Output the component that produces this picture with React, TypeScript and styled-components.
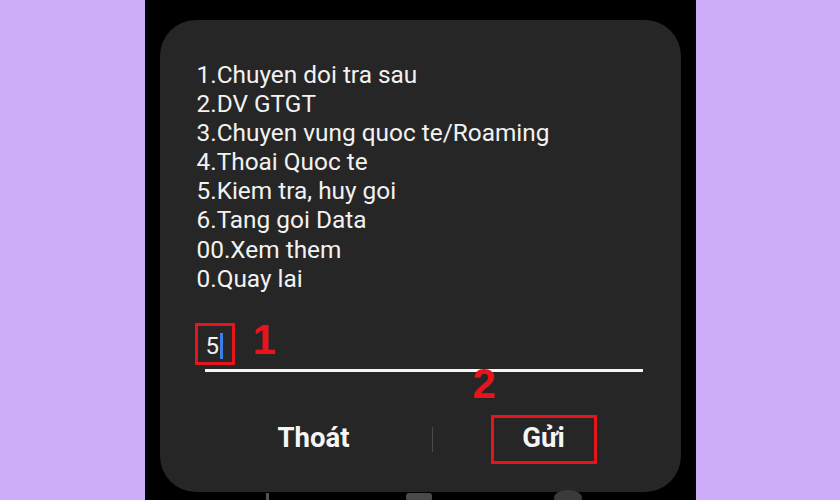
import React from 'react';
import styled, { createGlobalStyle } from 'styled-components';

const menuItems = [
  '1.Chuyen doi tra sau',
  '2.DV GTGT',
  '3.Chuyen vung quoc te/Roaming',
  '4.Thoai Quoc te',
  '5.Kiem tra, huy goi',
  '6.Tang goi Data',
  '00.Xem them',
  '0.Quay lai',
];

const GlobalStyle = createGlobalStyle`
  html, body {
    margin: 0;
    padding: 0;
    background: #cdadf7;
  }
  * {
    box-sizing: border-box;
  }
`;

function App(): JSX.Element {
  return (
    <>
      <GlobalStyle />
      <Page>
        <Side />
        <Phone>
          <Dialog>
            <MenuList>
              {menuItems.map((item) => (
                <MenuLine key={item}>{item}</MenuLine>
              ))}
            </MenuList>
            <InputRow>
              <HighlightBox>
                <InputValue>5</InputValue>
                <Cursor />
              </HighlightBox>
              <StepMark $left={58} $top={-4}>1</StepMark>
            </InputRow>
            <Underline>
              <StepMark $left={268} $top={-6}>2</StepMark>
            </Underline>
            <ButtonRow>
              <ButtonCell>
                <ActionText>Thoát</ActionText>
              </ButtonCell>
              <Divider />
              <ButtonCell>
                <SendBox>
                  <ActionText>Gửi</ActionText>
                </SendBox>
              </ButtonCell>
            </ButtonRow>
          </Dialog>
          <NavBar>
            <NavLines />
            <NavHome />
            <NavBack />
          </NavBar>
        </Phone>
        <Side />
      </Page>
    </>
  );
}

const Page = styled.div`
  width: 840px;
  height: 500px;
  display: flex;
  overflow: hidden;
  background: #cdadf7;
`;

const Side = styled.div`
  flex: 1;
  background: #cdadf7;
`;

const Phone = styled.div`
  width: 551px;
  height: 500px;
  background: #000;
  padding: 20px 15px 0 15px;
  display: flex;
  flex-direction: column;
`;

const Dialog = styled.div`
  height: 472px;
  flex-shrink: 0;
  background: #262626;
  border-radius: 36px;
  padding: 40px 38px 0 35px;
  display: flex;
  flex-direction: column;
`;

const MenuList = styled.div`
  display: flex;
  flex-direction: column;
  padding-left: 2px;
`;

const MenuLine = styled.div`
  font-family: Roboto, 'Noto Sans', sans-serif;
  font-size: 24.4px;
  line-height: 29.1px;
  color: #f2f2f2;
  white-space: nowrap;
`;

const InputRow = styled.div`
  position: relative;
  margin-top: 30px;
  display: flex;
`;

const HighlightBox = styled.div`
  width: 40px;
  height: 42px;
  border: 3px solid #e8131b;
  display: flex;
  align-items: center;
  padding-left: 8px;
  padding-top: 4px;
`;

const InputValue = styled.span`
  font-family: Roboto, 'Noto Sans', sans-serif;
  font-size: 24px;
  color: #f2f2f2;
  line-height: 1;
`;

const Cursor = styled.span`
  width: 3px;
  height: 26px;
  margin-left: 1px;
  background: #3b7fe8;
`;

const StepMark = styled.span<{ $left: number; $top: number }>`
  position: absolute;
  left: ${({ $left }) => $left}px;
  top: ${({ $top }) => $top}px;
  font-family: 'Liberation Sans', Arial, sans-serif;
  font-weight: 700;
  font-size: 42px;
  line-height: 1;
  color: #e8131b;
`;

const Underline = styled.div`
  position: relative;
  height: 3px;
  margin: 4px 0 0 10px;
  background: #f5f5f5;
`;

const ButtonRow = styled.div`
  display: grid;
  grid-template-columns: 236px 1px 1fr;
  align-items: center;
  margin: 43px -12px 0 1px;
  height: 49px;
`;

const ButtonCell = styled.div`
  display: flex;
  justify-content: center;
  align-items: center;
  height: 100%;
`;

const Divider = styled.div`
  width: 1px;
  height: 25px;
  background: #4a4a4a;
`;

const SendBox = styled.div`
  width: 106px;
  height: 49px;
  border: 3px solid #e8131b;
  display: flex;
  align-items: center;
  justify-content: center;
`;

const ActionText = styled.span`
  font-family: Roboto, 'Noto Sans', sans-serif;
  font-weight: 700;
  font-size: 27.5px;
  line-height: 1;
  margin-bottom: 4px;
  color: #f5f5f5;
`;

const NavBar = styled.div`
  display: flex;
  align-items: flex-start;
  padding-left: 106px;
  height: 8px;
`;

const NavLines = styled.div`
  width: 3px;
  height: 8px;
  margin-top: 1px;
  background: #555;
`;

const NavHome = styled.div`
  width: 26px;
  height: 8px;
  margin-left: 137px;
  margin-top: 1px;
  border-radius: 3px;
  background: #4a4a4a;
`;

const NavBack = styled.div`
  width: 28px;
  height: 16px;
  margin-left: 122px;
  margin-top: -2px;
  border-radius: 50%;
  background: #3a3a3a;
`;

export default App;
